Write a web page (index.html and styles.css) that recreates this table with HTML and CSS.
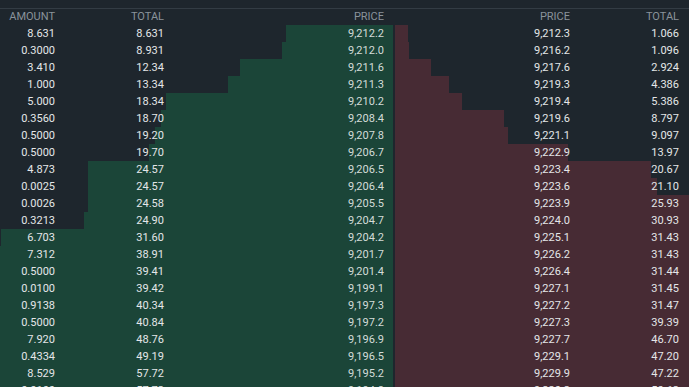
FILE: index.html
```html
<!DOCTYPE html>
<html>
<head>
<meta charset="utf-8">
<link rel="stylesheet" href="styles.css">
</head>
<body>
<div class="book">
  <div class="side bids">
    <div class="row head"><span>AMOUNT</span><span>TOTAL</span><span>PRICE</span></div>
    <div class="row"><i class="bar" style="width:107px"></i><span>8.631</span><span>8.631</span><span>9,212.2</span></div>
    <div class="row"><i class="bar" style="width:111px"></i><span>0.3000</span><span>8.931</span><span>9,212.0</span></div>
    <div class="row"><i class="bar" style="width:153px"></i><span>3.410</span><span>12.34</span><span>9,211.6</span></div>
    <div class="row"><i class="bar" style="width:165px"></i><span>1.000</span><span>13.34</span><span>9,211.3</span></div>
    <div class="row"><i class="bar" style="width:227px"></i><span>5.000</span><span>18.34</span><span>9,210.2</span></div>
    <div class="row"><i class="bar" style="width:232px"></i><span>0.3560</span><span>18.70</span><span>9,208.4</span></div>
    <div class="row"><i class="bar" style="width:238px"></i><span>0.5000</span><span>19.20</span><span>9,207.8</span></div>
    <div class="row"><i class="bar" style="width:244px"></i><span>0.5000</span><span>19.70</span><span>9,206.7</span></div>
    <div class="row"><i class="bar" style="width:305px"></i><span>4.873</span><span>24.57</span><span>9,206.5</span></div>
    <div class="row"><i class="bar" style="width:305px"></i><span>0.0025</span><span>24.57</span><span>9,206.4</span></div>
    <div class="row"><i class="bar" style="width:305px"></i><span>0.0026</span><span>24.58</span><span>9,205.5</span></div>
    <div class="row"><i class="bar" style="width:309px"></i><span>0.3213</span><span>24.90</span><span>9,204.7</span></div>
    <div class="row"><i class="bar" style="width:392px"></i><span>6.703</span><span>31.60</span><span>9,204.2</span></div>
    <div class="row"><i class="bar" style="width:482px"></i><span>7.312</span><span>38.91</span><span>9,201.7</span></div>
    <div class="row"><i class="bar" style="width:489px"></i><span>0.5000</span><span>39.41</span><span>9,201.4</span></div>
    <div class="row"><i class="bar" style="width:489px"></i><span>0.0100</span><span>39.42</span><span>9,199.1</span></div>
    <div class="row"><i class="bar" style="width:500px"></i><span>0.9138</span><span>40.34</span><span>9,197.3</span></div>
    <div class="row"><i class="bar" style="width:506px"></i><span>0.5000</span><span>40.84</span><span>9,197.2</span></div>
    <div class="row"><i class="bar" style="width:605px"></i><span>7.920</span><span>48.76</span><span>9,196.9</span></div>
    <div class="row"><i class="bar" style="width:610px"></i><span>0.4334</span><span>49.19</span><span>9,196.5</span></div>
    <div class="row"><i class="bar" style="width:716px"></i><span>8.529</span><span>57.72</span><span>9,195.2</span></div>
    <div class="row"><i class="bar" style="width:716px"></i><span>0.0100</span><span>57.73</span><span>9,194.8</span></div>
  </div>
  <div class="side asks">
    <div class="row head"><span>PRICE</span><span>TOTAL</span></div>
    <div class="row"><i class="bar" style="width:13px"></i><span>9,212.3</span><span>1.066</span></div>
    <div class="row"><i class="bar" style="width:14px"></i><span>9,216.2</span><span>1.096</span></div>
    <div class="row"><i class="bar" style="width:36px"></i><span>9,217.6</span><span>2.924</span></div>
    <div class="row"><i class="bar" style="width:54px"></i><span>9,219.3</span><span>4.386</span></div>
    <div class="row"><i class="bar" style="width:67px"></i><span>9,219.4</span><span>5.386</span></div>
    <div class="row"><i class="bar" style="width:109px"></i><span>9,219.6</span><span>8.797</span></div>
    <div class="row"><i class="bar" style="width:113px"></i><span>9,221.1</span><span>9.097</span></div>
    <div class="row"><i class="bar" style="width:173px"></i><span>9,222.9</span><span>13.97</span></div>
    <div class="row"><i class="bar" style="width:256px"></i><span>9,223.4</span><span>20.67</span></div>
    <div class="row"><i class="bar" style="width:262px"></i><span>9,223.6</span><span>21.10</span></div>
    <div class="row"><i class="bar" style="width:322px"></i><span>9,223.9</span><span>25.93</span></div>
    <div class="row"><i class="bar" style="width:384px"></i><span>9,224.0</span><span>30.93</span></div>
    <div class="row"><i class="bar" style="width:390px"></i><span>9,225.1</span><span>31.43</span></div>
    <div class="row"><i class="bar" style="width:390px"></i><span>9,226.2</span><span>31.43</span></div>
    <div class="row"><i class="bar" style="width:390px"></i><span>9,226.4</span><span>31.44</span></div>
    <div class="row"><i class="bar" style="width:390px"></i><span>9,227.1</span><span>31.45</span></div>
    <div class="row"><i class="bar" style="width:390px"></i><span>9,227.2</span><span>31.47</span></div>
    <div class="row"><i class="bar" style="width:488px"></i><span>9,227.3</span><span>39.39</span></div>
    <div class="row"><i class="bar" style="width:579px"></i><span>9,227.7</span><span>46.70</span></div>
    <div class="row"><i class="bar" style="width:585px"></i><span>9,229.1</span><span>47.20</span></div>
    <div class="row"><i class="bar" style="width:586px"></i><span>9,229.9</span><span>47.22</span></div>
    <div class="row"><i class="bar" style="width:628px"></i><span>9,230.3</span><span>50.63</span></div>
  </div>
</div>
</body>
</html>
```

FILE: styles.css
```css
html, body {
  margin: 0;
  padding: 0;
  background: #1e262d;
  overflow: hidden;
}
body {
  font-family: Roboto, "Liberation Sans", sans-serif;
  font-size: 11px;
  color: #e4e6e8;
  height: 387px;
}
.book {
  margin-top: 8px;
  border-top: 1px solid #333c44;
  display: flex;
  gap: 2px;
}
.side {
  display: flex;
  flex-direction: column;
  overflow: hidden;
}
.bids {
  width: 393px;
}
.asks {
  flex: 1;
}
.row {
  position: relative;
  display: grid;
  height: 17px;
  line-height: 17px;
  text-align: right;
}
.bids .row {
  grid-template-columns: 55px 109px 220px;
}
.asks .row {
  grid-template-columns: 175px 109px;
}
.row span {
  position: relative;
  white-space: nowrap;
}
.head {
  height: 16px;
  line-height: 15px;
  color: #8a939b;
  font-size: 11px;
}
.bar {
  position: absolute;
  top: 0;
  bottom: 0;
  max-width: 100%;
}
.bids .bar {
  right: 0;
  background: #1b4538;
}
.asks .bar {
  left: 0;
  background: #472b34;
}
.bids .row span:nth-child(4) {
  color: #d3dcd8;
}
```
